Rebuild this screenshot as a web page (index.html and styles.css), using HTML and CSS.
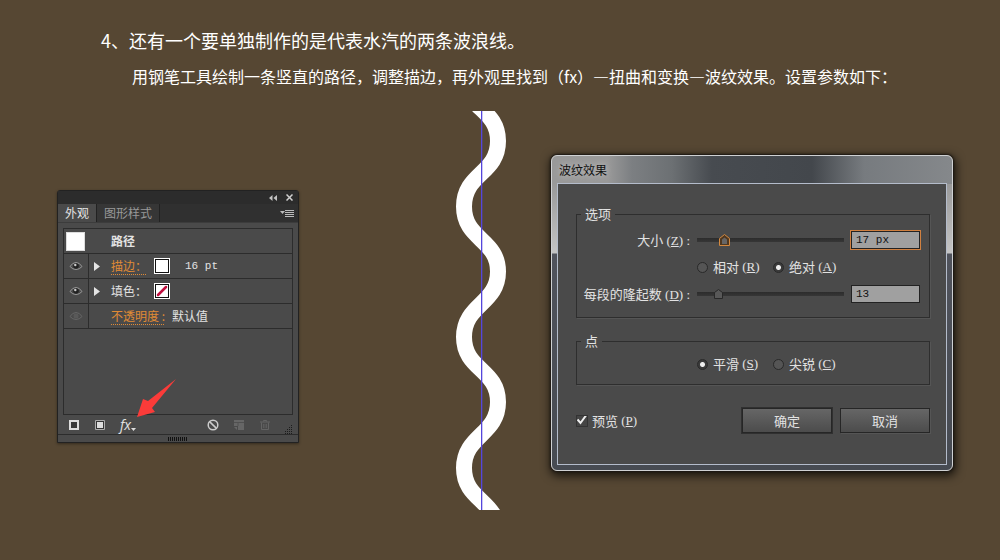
FILE: index.html
```html
<!DOCTYPE html>
<html lang="zh-CN">
<head>
  <meta charset="utf-8"/>
  <meta name="viewport" content="width=device-width, initial-scale=1.0"/>
  <title>波纹效果</title>
  <link rel="stylesheet" href="styles.css">
</head>
<body>
  <header class="intro">
    <h1>4、还有一个要单独制作的是代表水汽的两条波浪线。</h1>
    <p>用钢笔工具绘制一条竖直的路径，调整描边，再外观里找到（fx）—扭曲和变换—波纹效果。设置参数如下：</p>
  </header>

  <main class="stage">
    <!-- Panneau Apparence -->
    <section class="panel" aria-label="外观">
      <div class="panel-top">
        <button type="button" aria-label="折叠"><svg width="8" height="6" viewBox="0 0 8 6"><path d="M3.5 0v6L0 3zM8 0v6L4.500 3z" fill="#c4c4c4"/></svg></button>
        <button type="button" aria-label="关闭"><svg width="7" height="7" viewBox="0 0 7 7"><path d="M.5.5l6 6M6.500.5l-6 6" stroke="#d0d0d0" stroke-width="1.500"/></svg></button>
      </div>
      <div class="tabs">
        <button type="button" class="tab active">外观</button>
        <button type="button" class="tab">图形样式</button>
        <button type="button" class="panel-menu" aria-label="菜单"><svg width="14" height="9" viewBox="0 0 14 9"><path d="M0 2h5L2.500 5z" fill="#bbb"/><path d="M5 1.500h9M5 3.500h9M5 5.500h9M5 7.500h9" stroke="#bbb"/></svg></button>
      </div>
      <div class="panel-body">
        <div class="rows">
          <div class="row row-title">
            <span class="thumb"></span>
            <strong>路径</strong>
          </div>
          <div class="row">
            <button type="button" class="eye" aria-label="显示"><svg width="14" height="10" viewBox="0 0 14 10"><path d="M1 5.500Q3.500 1.500 7 1.500T13 5.500Q10.500 8.500 7 8.500T1 5.500z" fill="#4a4a4a" stroke="#999"/><circle cx="7" cy="5" r="2.800" fill="#222"/><circle cx="6.300" cy="4" r="1.200" fill="#ccc"/></svg></button>
            <button type="button" class="arrow" aria-label="展开"><svg width="6" height="9" viewBox="0 0 6 9"><path d="M0 0l6 4.500L0 9z" fill="#e4e4e4"/></svg></button>
            <a class="link name" href="#">描边：</a>
            <span class="swatch"><i></i></span>
            <span class="mono">16 pt</span>
          </div>
          <div class="row">
            <button type="button" class="eye" aria-label="显示"><svg width="14" height="10" viewBox="0 0 14 10"><path d="M1 5.500Q3.500 1.500 7 1.500T13 5.500Q10.500 8.500 7 8.500T1 5.500z" fill="#4a4a4a" stroke="#999"/><circle cx="7" cy="5" r="2.800" fill="#222"/><circle cx="6.300" cy="4" r="1.200" fill="#ccc"/></svg></button>
            <button type="button" class="arrow" aria-label="展开"><svg width="6" height="9" viewBox="0 0 6 9"><path d="M0 0l6 4.500L0 9z" fill="#e4e4e4"/></svg></button>
            <span class="name">填色：</span>
            <span class="swatch"><i><svg width="12" height="12" viewBox="0 0 12 12"><path d="M2 10l8-8" stroke="#c01040" stroke-width="2.500" stroke-linecap="round"/></svg></i></span>
          </div>
          <div class="row">
            <button type="button" class="eye dim" aria-label="显示"><svg width="14" height="10" viewBox="0 0 14 10"><path d="M1 5.500Q3.500 1.500 7 1.500T13 5.500Q10.500 8.500 7 8.500T1 5.500z" fill="none" stroke="#999"/><circle cx="7" cy="5" r="2.500" fill="#777"/></svg></button>
            <span class="arrow"></span>
            <a class="link" href="#">不透明度 :</a>
            <span class="value">默认值</span>
          </div>
        </div>
        <div class="tools">
          <button type="button" aria-label="新建描边"><svg width="12" height="12" viewBox="0 0 12 12"><path d="M2 2h8v8H2z" fill="#383838" stroke="#ddd" stroke-width="2"/></svg></button>
          <button type="button" aria-label="新建填色"><svg width="12" height="12" viewBox="0 0 12 12"><path d="M1.500 1.500h9v9h-9z" fill="#333" stroke="#aaa"/><path d="M3 3h6v6H3z" fill="#ddd"/></svg></button>
          <button type="button" class="fx" aria-label="fx">fx<svg width="5" height="3" viewBox="0 0 5 3"><path d="M0 0h5L2.500 3z" fill="#ddd"/></svg></button>
          <button type="button" class="clear" aria-label="清除外观"><svg width="12" height="12" viewBox="0 0 12 12"><circle cx="6" cy="6" r="4.800" fill="none" stroke="#ccc" stroke-width="1.500"/><path d="M2.600 2.600l6.800 6.800" stroke="#ccc" stroke-width="1.500"/></svg></button>
          <button type="button" aria-label="复制"><svg width="12" height="12" viewBox="0 0 12 12"><path d="M1 1h10v10H5V7H1z" fill="#666"/><path d="M1 3.500h10M5 7V4" stroke="#505050"/><path d="M1 8h3v3z" fill="#666"/></svg></button>
          <button type="button" aria-label="删除"><svg width="12" height="12" viewBox="0 0 12 12"><path d="M1 3h10M4.500 2.500v-1h3v1M2.500 3.500v7h7v-7M4.800 5v4M7.200 5v4" fill="none" stroke="#646464"/></svg></button>
          <svg class="corner" width="8" height="10" viewBox="0 0 8 10"><path d="M6 1.500h2M4 3.500h4M2 5.500h6M0 7.500h8M0 9.500h8" stroke="#1c1c1c" stroke-dasharray="1 1"/></svg>
        </div>
        <svg class="pointer" width="42" height="40" viewBox="0 0 42 40"><path d="M40 1L12 23l-5-2L1 39l18-5-3-4z" fill="#fb3b39"/></svg>
      </div>
      <div class="grip"><span></span></div>
    </section>

    <!-- Vague dessinée -->
    <svg class="wave" width="50" height="399" viewBox="0 0 50 399" role="img" aria-label="波浪线">
      <path d="M8-35C8-2 42-3 42 30S8 62 8 95.500 42 128 42 160.500 8 193 8 226 42 258 42 291 8 324 8 357 42 389 42 422" fill="none" stroke="#fff" stroke-width="16"/>
      <path d="M25 0h1.300v399H25z" fill="#5546dc"/>
    </svg>

    <!-- Boîte de dialogue -->
    <form class="dialog">
      <h2>波纹效果</h2>
      <div class="dialog-body">
        <fieldset>
          <legend>选项</legend>
          <div class="options">
            <label for="size">大小<span class="key"> (<u>Z</u>) :</span></label>
            <input type="range" id="size" class="focus" min="0" max="100" value="16">
            <input type="text" class="focus" value="17 px" aria-label="大小">
            <div class="radios">
              <label><input type="radio" name="mode">相对<span class="key"> (<u>R</u>)</span></label>
              <label><input type="radio" name="mode" checked>绝对<span class="key"> (<u>A</u>)</span></label>
            </div>
            <label for="ridges">每段的隆起数<span class="key"> (<u>D</u>) :</span></label>
            <input type="range" id="ridges" min="0" max="100" value="11">
            <input type="text" value="13" aria-label="每段的隆起数">
          </div>
        </fieldset>
        <fieldset class="points">
          <legend>点</legend>
          <div class="radios">
            <label><input type="radio" name="point" checked>平滑<span class="key"> (<u>S</u>)</span></label>
            <label><input type="radio" name="point">尖锐<span class="key"> (<u>C</u>)</span></label>
          </div>
        </fieldset>
        <div class="actions">
          <label><input type="checkbox" checked>预览<span class="key"> (<u>P</u>)</span></label>
          <button type="button" class="ok">确定</button>
          <button type="button">取消</button>
        </div>
      </div>
    </form>
  </main>
</body>
</html>
```
FILE: styles.css
```css
* { box-sizing: border-box; }
body {
  margin: 0;
  min-height: 100vh;
  background-color: #564733;
  color: #fff;
  font-family: "Noto Sans CJK SC", sans-serif;
}
button {
  padding: 0;
  border: none;
  background: none;
  color: inherit;
  font: inherit;
  cursor: pointer;
}
svg { display: block; }

/* Texte d'introduction */
.intro { padding: 26px 40px 0 101px; }
.intro h1 { margin: 0; font-size: 18px; line-height: 28px; font-weight: normal; }
.intro p { margin: 10px 0 0 31px; font-size: 16px; line-height: 24px; }

.stage {
  display: flex;
  align-items: flex-start;
  padding: 23px 47px 48px 57px;
}
.wave { flex: none; margin-left: auto; }

/* Panneau */
.panel {
  flex: 0 1 242px;
  margin-top: 79px;
  border: 1px solid #222;
  border-radius: 3px 3px 0 0;
  background-color: #4a4a4a;
  box-shadow: 0 1px 3px rgba(0, 0, 0, 0.4);
  color: #e2e2e2;
  font-size: 12px;
  line-height: 18px;
}
.panel-top {
  display: flex;
  justify-content: flex-end;
  align-items: center;
  gap: 9px;
  height: 13px;
  padding-right: 5px;
  background-color: #2c2c2c;
}
.tabs { display: flex; background-color: #303030; border-bottom: 1px solid #3c3c3c; }
.tab { padding: 0 7px; border-right: 1px solid #222; background-color: #363636; color: #999; }
.tab.active { background-color: #4a4a4a; color: #e2e2e2; }
.panel-menu { margin: 0 4px 0 auto; }
.panel-body { position: relative; padding: 5px 5px 0; }
.rows { min-height: 187px; border: 1px solid #2c2c2c; }
.row {
  display: flex;
  align-items: center;
  height: 25px;
  border-bottom: 1px solid #2c2c2c;
}
.thumb { width: 19px; height: 19px; margin: 0 26px 0 2px; background-color: #fff; border: 1px solid #ddd; }
.eye {
  display: flex;
  justify-content: center;
  align-items: center;
  align-self: stretch;
  width: 25px;
  border-right: 1px solid #2c2c2c;
}
.dim svg { opacity: 0.35; }
.arrow { width: 22px; padding-left: 5px; }
.name { margin-right: 7px; }
.link { color: #e08a35; text-decoration: underline dotted; text-underline-offset: 3px; }
.value { margin-left: 7px; }
.swatch { padding: 1px; margin-right: 15px; border: 1px solid #fff; background-color: #111; }
.swatch i { display: block; width: 12px; height: 12px; background-color: #fff; }
.mono { font-family: "Liberation Mono", monospace; font-size: 11px; }
.tools { display: flex; align-items: center; gap: 14px; height: 19px; padding-left: 5px; }
.tools .fx {
  display: flex;
  align-items: flex-end;
  margin-right: auto;
  font: italic 14px/16px "Open Sans", sans-serif;
}
.fx svg { margin-bottom: 2px; }
.corner { align-self: flex-end; }
.pointer { position: absolute; left: 78px; bottom: 16px; }
.grip { display: flex; justify-content: center; padding: 2px 0 1px; border-top: 1px solid #2c2c2c; }
.grip span { width: 20px; height: 4px; background: repeating-linear-gradient(90deg, #111 0 1px, #4a4a4a 1px 2px); }

/* Boîte de dialogue */
.dialog {
  flex: 0 1 402px;
  margin: 44px 0 0 45px;
  padding: 0 5px 5px;
  border: 1px solid #cfd1d3;
  border-radius: 6px;
  background:
    linear-gradient(90deg, #999 0, #999 14%, #7c7f82 20%, #6c7073 30%, #474b50 40%, #43474c 65%, #777b7f 78%, #85888b) top / 100% 28px no-repeat,
    linear-gradient(#888 0, #c4c4c4 97px, #50535c 98px, #474b52);
  box-shadow: 0 0 2px 1px #1b1712, 1px 3px 10px 2px rgba(0, 0, 0, 0.7);
}
.dialog h2 {
  margin: 0;
  padding-left: 2px;
  color: #111;
  font-size: 12px;
  line-height: 27px;
  font-weight: normal;
  text-shadow: 0 0 6px #ccc;
}
.dialog-body {
  padding: 22px 16px 31px 18px;
  border: 1px solid #b4bccb;
  background-color: #4a4a4a;
  color: #e2e2e2;
  font-size: 13px;
  line-height: 20px;
}
.key { font-family: "Liberation Serif", serif; white-space: pre; }
fieldset {
  min-width: 0;
  margin: 0;
  padding: 0;
  border: 1px solid #2e2e2e;
  box-shadow: 1px 1px 0 #555;
}
legend { margin-left: 4px; padding: 0 4px; line-height: 16px; }
.options {
  display: grid;
  grid-template-columns: 113px 1fr 69px;
  grid-auto-rows: 20px;
  gap: 7px;
  padding: 8px 9px 13px 0;
}
.options > label { text-align: right; white-space: nowrap; }
.points { margin-top: 15px; }
.points .radios { padding: 5px 9px 10px 120px; }
.radios { display: flex; grid-column: 2 / 4; }
.radios label { display: flex; align-items: center; width: 76px; height: 20px; white-space: nowrap; }
input[type="radio"] {
  appearance: none;
  flex: none;
  width: 11px;
  height: 11px;
  margin: 0 5px 0 0;
  border: 1px solid #292929;
  border-radius: 50%;
  background-color: #555;
}
input[type="radio"]:checked { background: radial-gradient(circle, #eee 0 2px, #3a3a3a 3px); }
input[type="text"] {
  width: 100%;
  height: 18px;
  align-self: center;
  padding: 0 4px;
  border: 1px solid #222;
  background-color: #a0a0a0;
  color: #111;
  font: 11px "Liberation Mono", monospace;
}
input[type="text"].focus { outline: 1px solid #d08040; }
input[type="range"] {
  appearance: none;
  width: 100%;
  min-width: 0;
  height: 20px;
  margin: 0;
  background: linear-gradient(#2c2c2c, #363636) center / 100% 4px no-repeat;
}
input[type="range"]::-webkit-slider-thumb {
  appearance: none;
  width: 13px;
  height: 14px;
  background: url("data:image/svg+xml,%3Csvg xmlns='http://www.w3.org/2000/svg' width='13' height='14'%3E%3Cpath d='M2.5 11.500v-6l4-3 4 3v6z' fill='%23585858' stroke='%23282828'/%3E%3C/svg%3E");
}
input[type="range"].focus::-webkit-slider-thumb {
  background: url("data:image/svg+xml,%3Csvg xmlns='http://www.w3.org/2000/svg' width='13' height='14'%3E%3Cpath d='M1.500 12.500V5.500l5-4 5 4v7z' fill='%23503820' stroke='%23d48a40'/%3E%3Cpath d='M4 11V6.500l2.500-2L9 6.500V11z' fill='%23666'/%3E%3C/svg%3E");
}
input[type="checkbox"] {
  appearance: none;
  width: 12px;
  height: 12px;
  margin: 0 4px 0 0;
  border: 1px solid #333;
  background: #444 url("data:image/svg+xml,%3Csvg xmlns='http://www.w3.org/2000/svg' width='12' height='12'%3E%3Cpath d='M1.500 4.500l3 3.500L10 .5' fill='none' stroke='%23eee' stroke-width='2'/%3E%3C/svg%3E") center no-repeat;
}
.actions { display: flex; align-items: center; gap: 8px; margin-top: 23px; }
.actions label { display: flex; align-items: center; margin-right: auto; }
.actions button {
  width: 90px;
  height: 25px;
  border: 1px solid #262626;
  background: linear-gradient(#666, #4c4c4c);
  box-shadow: 1px 1px 0 #555;
}
.actions .ok { box-shadow: 0 0 0 1px #303030; }
```
